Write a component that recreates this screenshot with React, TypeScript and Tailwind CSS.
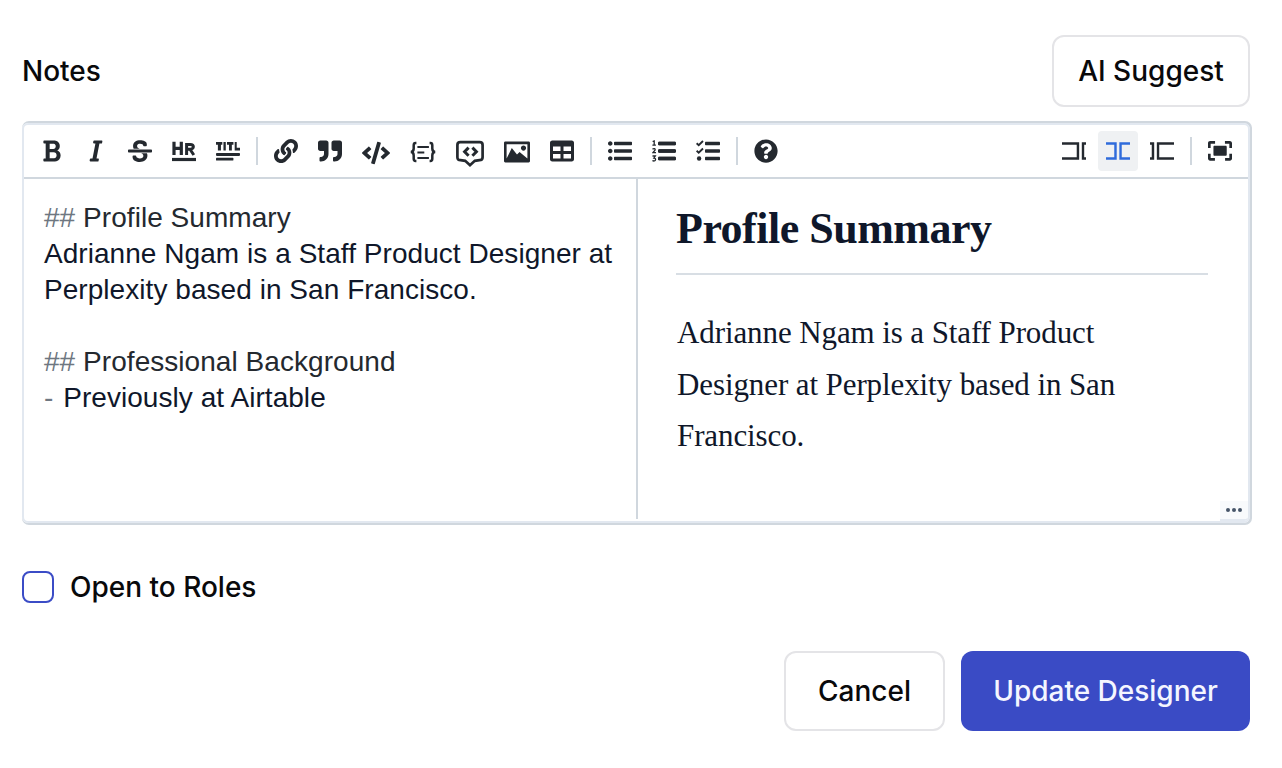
import React from "react";
import { FaLink, FaQuoteRight, FaCode, FaTable, FaQuestionCircle } from "react-icons/fa";

type IconProps = { d: string; box: string; w?: number };

function Glyph({ d, box, w = 24 }: IconProps) {
  return (
    <svg width={w} height={w} viewBox={box} fill="currentColor" fillRule="evenodd">
      <path d={d} />
    </svg>
  );
}

const BOLD =
  "M304.793 243.891c33.639-18.537 53.657-54.16 53.657-95.693 0-48.236-26.25-87.626-68.626-104.179C265.138 34.01 240.849 32 209.661 32H24c-8.837 0-16 7.163-16 16v33.049c0 8.837 7.163 16 16 16h33.113v318.53H24c-8.837 0-16 7.163-16 16V464c0 8.837 7.163 16 16 16h195.69c24.203 0 44.834-1.289 66.866-7.584C337.52 457.193 376 410.647 376 350.014c0-52.168-26.573-91.684-71.207-106.123zM142.217 100.809h67.444c16.294 0 27.536 2.019 37.525 6.717 15.828 8.479 24.906 26.502 24.906 49.446 0 35.029-20.32 56.79-53.029 56.79h-76.846V100.809zm112.642 305.475c-10.14 4.056-22.677 4.907-31.409 4.907h-81.233V281.943h84.367c39.645 0 63.057 25.38 63.057 63.553.001 28.425-13.66 52.483-34.782 60.788z";
const ITALIC =
  "M204.758 416h-33.849l62.092-320h40.725a16 16 0 0 0 15.704-12.937l6.242-32C297.599 41.184 290.034 32 279.968 32H120.235a16 16 0 0 0-15.704 12.937l-6.242 32C96.362 86.816 103.927 96 113.993 96h33.846l-62.09 320H46.278a16 16 0 0 0-15.704 12.935l-6.245 32C22.402 470.815 29.967 480 40.034 480h158.479a16 16 0 0 0 15.704-12.935l6.245-32c1.927-9.88-5.638-19.065-15.704-19.065z";
const STRIKE =
  "M496 288H16c-8.837 0-16-7.163-16-16v-32c0-8.837 7.163-16 16-16h480c8.837 0 16 7.163 16 16v32c0 8.837-7.163 16-16 16zm-214.666 16c27.258 12.937 46.524 28.683 46.524 56.243 0 33.108-28.977 53.676-75.621 53.676-32.325 0-76.874-12.08-76.874-44.271V368c0-8.837-7.164-16-16-16H113.75c-8.836 0-16 7.163-16 16v19.204c0 66.845 77.717 101.82 154.487 101.82 88.578 0 162.013-45.438 162.013-134.424 0-19.815-3.618-36.417-10.143-50.6H281.334zm-30.952-96c-32.422-13.505-56.836-28.946-56.836-59.683 0-33.92 30.901-47.406 64.962-47.406 42.647 0 64.962 16.593 64.962 32.985V136c0 8.837 7.163 16 16 16h45.613c8.836 0 16-7.163 16-16v-30.318c0-52.438-71.725-79.875-142.575-79.875-85.203 0-150.726 40.972-150.726 125.646 0 22.71 4.665 41.176 12.777 56.547h129.823z";
const IMAGE =
  "M15 9c1.1 0 2-.9 2-2s-.9-2-2-2-2 .9-2 2 .9 2 2 2zm4-7H1c-.55 0-1 .45-1 1v14c0 .55.45 1 1 1h18c.55 0 1-.45 1-1V3c0-.55-.45-1-1-1zm-1 13l-6-5-2 2-4-5-4 8V4h16v11z";
const LIST =
  "M96 96c0 26.51-21.49 48-48 48S0 122.51 0 96s21.49-48 48-48 48 21.49 48 48zM48 208c-26.51 0-48 21.49-48 48s21.49 48 48 48 48-21.49 48-48-21.49-48-48-48zm0 160c-26.51 0-48 21.49-48 48s21.49 48 48 48 48-21.49 48-48-21.49-48-48-48zm96-236h352c8.837 0 16-7.163 16-16V76c0-8.837-7.163-16-16-16H144c-8.837 0-16 7.163-16 16v40c0 8.837 7.163 16 16 16zm0 160h352c8.837 0 16-7.163 16-16v-40c0-8.837-7.163-16-16-16H144c-8.837 0-16 7.163-16 16v40c0 8.837 7.163 16 16 16zm0 160h352c8.837 0 16-7.163 16-16v-40c0-8.837-7.163-16-16-16H144c-8.837 0-16 7.163-16 16v40c0 8.837 7.163 16 16 16z";
const EDIT =
  "M0 71.3V122H319V397H0V449.7H372V71.3ZM429 71.3H520V122L481 123V396H520V449.7H429Z";
const LIVE =
  "M0 71.3V122H179V397H0V449.7H232V71.3ZM289 71.3H520V122L341 123V396H520V449.7H289Z";
const PREVIEW =
  "M0 71.3V122L38 123V398L0 397V449.7H91V71.3ZM148 71.3H520V122L200 124V397L520 396V449.7H148Z";
const FULL =
  "M118 171.13V342.2C118 353.77 126.68 365.33 141.13 365.33H382.63C394.2 365.33 405.77 356.66 405.77 342.2V171.13C405.77 159.57 397.09 148 382.63 148H141.13C126.67 148 118 156.68 118 171.13zM465.35 413.44H370V471.22H474.02C500.03 471.22 520.25 451 520.25 425V321H462.46V413.44zM471.02 43H367V100.78H462.35V196.11H520.14V89.22C517.25 63.22 497.03 43 471.02 43zM57.79 100.78H153.14V43H46.23C20.23 43 0 63.22 0 89.22V193.22H57.79zM57.79 321H0V425C0 451 20.23 471.22 46.23 471.22H150.25V413.44H57.79z";

function RuleIcon() {
  return (
    <svg width="24" height="24" viewBox="0 0 24 24" fill="none" stroke="currentColor">
      <path d="M0 20.5H24" strokeWidth="3.2" />
      <path d="M2 2.7V16M9.3 2.7V16M2 9.3H9.3" strokeWidth="3.2" />
      <path d="M14.6 16V5.4H18.2C22.4 5.4 22.4 10.2 18.2 10.2H15M18 10.2L21.8 16" strokeWidth="3" />
    </svg>
  );
}

function TitleIcon() {
  return (
    <svg width="24" height="24" viewBox="0 0 520 520" fill="currentColor">
      <rect y="408" width="377" height="60" rx="15" />
      <rect y="304" width="520" height="62" rx="18" />
      <path d="M136.8 64V126H107.3V251H40.8V126H0V64ZM212 64V251H161.6V64ZM378 64V126H343.3V251H281.8V126H238V64ZM449 189.6H520V251H405V64H449Z" />
    </svg>
  );
}

function BlockIcon() {
  return (
    <svg width="26" height="26" viewBox="0 0 26 26" fill="none" stroke="currentColor">
      <path d="M6.4 5H5.6C4.2 5 3.7 5.8 3.7 7.2V10.6C3.7 12.6 2.7 13.9 .8 14C2.7 14.1 3.7 15.4 3.7 17.4V20.8C3.7 22.2 4.2 23 5.6 23H6.4M19.6 5H20.4C21.8 5 22.3 5.8 22.3 7.2V10.6C22.3 12.6 23.3 13.9 25.2 14C23.3 14.1 22.3 15.4 22.3 17.4V20.8C22.3 22.2 21.8 23 20.4 23H19.6" strokeWidth="2.5" />
      <path d="M7.4 9H18.9M7.4 14.5H14.3M7.4 20H18.9" strokeWidth="1.9" />
    </svg>
  );
}

function CommentIcon() {
  return (
    <svg width="28" height="28" viewBox="0 0 28 28" fill="none" stroke="currentColor" strokeWidth="2.7" className="overflow-visible">
      <path d="M4.4 5.2H23.6C25.6 5.2 26.6 6.2 26.6 8V20.3C26.6 22.2 25.6 23.2 23.5 23.2L18.8 23.8L14 28.2L9.2 23.8L4.5 23.2C2.4 23.2 1.4 22.2 1.4 20.3V8C1.4 6.2 2.4 5.2 4.4 5.2Z" />
      <path d="M12.6 10.6L8.6 14.7L12.6 18.8M16.4 10.6L20.4 14.7L16.4 18.8" strokeWidth="3" />
    </svg>
  );
}

function NumberedIcon() {
  return (
    <svg width="24" height="24" viewBox="0 0 24 24" fill="none" stroke="currentColor">
      <path d="M7 4.5H23M7 12H23M7 19.5H23" strokeWidth="3.4" />
      <rect x="6" y="2.8" width="18" height="3.4" rx=".7" fill="currentColor" stroke="none" />
      <rect x="6" y="10.3" width="18" height="3.4" rx=".7" fill="currentColor" stroke="none" />
      <rect x="6" y="17.8" width="18" height="3.4" rx=".7" fill="currentColor" stroke="none" />
      <path d="M.6 2.5L2.2 1.9V6M.4 6.2H3.9M.5 10.3C1.8 9 3.6 9.7 3 11.2L.8 13.7H4M.5 17H3.3L1.9 19.1C4.2 19 4.1 22 1.9 22L.4 21.6" strokeWidth="1.3" />
    </svg>
  );
}

function TasksIcon() {
  return (
    <svg width="24" height="24" viewBox="0 0 24 24" fill="currentColor">
      <rect x="9" y="2.8" width="15" height="3.4" rx=".7" />
      <rect x="9" y="10.3" width="15" height="3.4" rx=".7" />
      <rect x="9" y="17.8" width="15" height="3.4" rx=".7" />
      <circle cx="3.1" cy="19.5" r="2.2" />
      <path d="M.6 4.3L2.7 6.2L7 2M.6 11.8L2.7 13.7L7 9.5" fill="none" stroke="currentColor" strokeWidth="1.9" />
    </svg>
  );
}

function Tool({ label, active, children }: { label: string; active?: boolean; children: React.ReactNode }) {
  return (
    <button
      aria-label={label}
      className={
        active
          ? "flex h-10 shrink-0 items-center justify-center rounded-[4px] bg-[#eff1f3] px-2 text-[#2f6bdb]"
          : "flex h-10 shrink-0 items-center justify-center rounded-[4px] px-2 text-[#24292f]"
      }
    >
      {children}
    </button>
  );
}

function Divider() {
  return <span className="mx-1 h-7 w-0.5 shrink-0 bg-[#d0d7de]" />;
}

export default function App() {
  return (
    <main className="flex h-[768px] w-[1282px] flex-col overflow-hidden bg-white pt-[35px] pr-8 pl-[22px] font-['Inter',sans-serif] text-[28px] font-medium text-[#09090b]">
      <header className="flex h-[72px] shrink-0 items-center justify-between">
        <label>Notes</label>
        <button className="h-[72px] w-[198px] rounded-xl border-2 border-[#e4e4e7] whitespace-nowrap">AI Suggest</button>
      </header>

      <section className="relative mt-4 flex h-[400px] w-[1228px] shrink-0 flex-col rounded-[6px] border-2 border-[#e2e8f0] shadow-[1px_1px_0_1px_#d0d7de,1px_-1px_0_1px_#d0d7de]">
        <div className="flex h-[54px] shrink-0 items-center justify-between border-b-2 border-[#d0d7de] px-2">
          <div className="flex items-center gap-1">
            <Tool label="Bold"><Glyph d={BOLD} box="0 0 384 512" /></Tool>
            <Tool label="Italic"><Glyph d={ITALIC} box="0 0 320 512" /></Tool>
            <Tool label="Strikethrough"><Glyph d={STRIKE} box="0 0 512 512" /></Tool>
            <Tool label="Rule"><RuleIcon /></Tool>
            <Tool label="Title"><TitleIcon /></Tool>
            <Divider />
            <Tool label="Link"><FaLink size={24} /></Tool>
            <Tool label="Quote"><FaQuoteRight size={24} /></Tool>
            <Tool label="Code"><FaCode size={28} className="translate-y-0.5" /></Tool>
            <Tool label="Code block"><BlockIcon /></Tool>
            <Tool label="Comment"><CommentIcon /></Tool>
            <Tool label="Image"><span className="translate-y-px"><Glyph d={IMAGE} box="0 0 20 20" w={26} /></span></Tool>
            <Tool label="Table"><FaTable size={24} /></Tool>
            <Divider />
            <Tool label="List"><Glyph d={LIST} box="0 0 512 512" /></Tool>
            <Tool label="Numbered list"><NumberedIcon /></Tool>
            <Tool label="Task list"><TasksIcon /></Tool>
            <Divider />
            <Tool label="Help"><FaQuestionCircle size={24} /></Tool>
          </div>
          <div className="flex items-center gap-1">
            <Tool label="Edit"><Glyph d={EDIT} box="0 0 520 520" /></Tool>
            <Tool label="Live" active><Glyph d={LIVE} box="0 0 520 520" /></Tool>
            <Tool label="Preview"><Glyph d={PREVIEW} box="0 0 520 520" /></Tool>
            <Divider />
            <Tool label="Full screen"><Glyph d={FULL} box="0 0 520 520" /></Tool>
          </div>
        </div>
        <div className="flex h-[340px] shrink-0">
          <div className="w-[612px] shrink-0 pt-[21px] pl-5 font-['Liberation_Sans',sans-serif] text-[28px] leading-9 font-normal tracking-[0.05px] whitespace-nowrap text-[#0f172a]">
            <p className="text-[#24292f]"><span className="text-[#6e7781]">##</span> Profile Summary</p>
            <p>Adrianne Ngam is a Staff Product Designer at</p>
            <p>Perplexity based in San Francisco.</p>
            <p className="h-9" />
            <p className="text-[#24292f]"><span className="text-[#6e7781]">##</span> Professional Background</p>
            <p><span className="mr-0.5 text-[#6e7781]">-</span> Previously at Airtable</p>
          </div>
          <div className="flex-1 border-l-2 border-[#d0d7de] pr-10 pl-[38px] font-['Liberation_Serif',serif] whitespace-nowrap text-[#0f172a]">
            <h2 className="h-24 border-b-2 border-[#d8dee4] pt-[18px] text-[44px] leading-[64px] font-bold tracking-[-0.5px]">Profile Summary</h2>
            <div className="pt-8 pl-px text-[31px] leading-[51.5px] font-normal tracking-[-0.1px]">
              <p>Adrianne Ngam is a Staff Product</p>
              <p>Designer at Perplexity based in San</p>
              <p>Francisco.</p>
            </div>
          </div>
        </div>
        <div className="absolute right-0 bottom-0 flex h-5 w-7 items-center justify-center gap-0.5 rounded-br-[4px] border-b-2 border-[#e2e8f0] bg-[#f8fafc]">
          <i className="size-1 rounded-full bg-[#475569]" />
          <i className="size-1 rounded-full bg-[#475569]" />
          <i className="size-1 rounded-full bg-[#475569]" />
        </div>
      </section>

      <label className="mt-12 flex h-8 shrink-0 items-center gap-4">
        <span className="size-8 rounded-lg border-2 border-[#3b4cc6]" />
        Open to Roles
      </label>

      <footer className="mt-12 flex h-20 shrink-0 justify-end gap-4">
        <button className="w-[161px] rounded-xl border-2 border-[#e4e4e7]">Cancel</button>
        <button className="w-[289px] rounded-xl bg-[#3a4bc5] whitespace-nowrap text-[#f4f6ff]">Update Designer</button>
      </footer>
    </main>
  );
}
